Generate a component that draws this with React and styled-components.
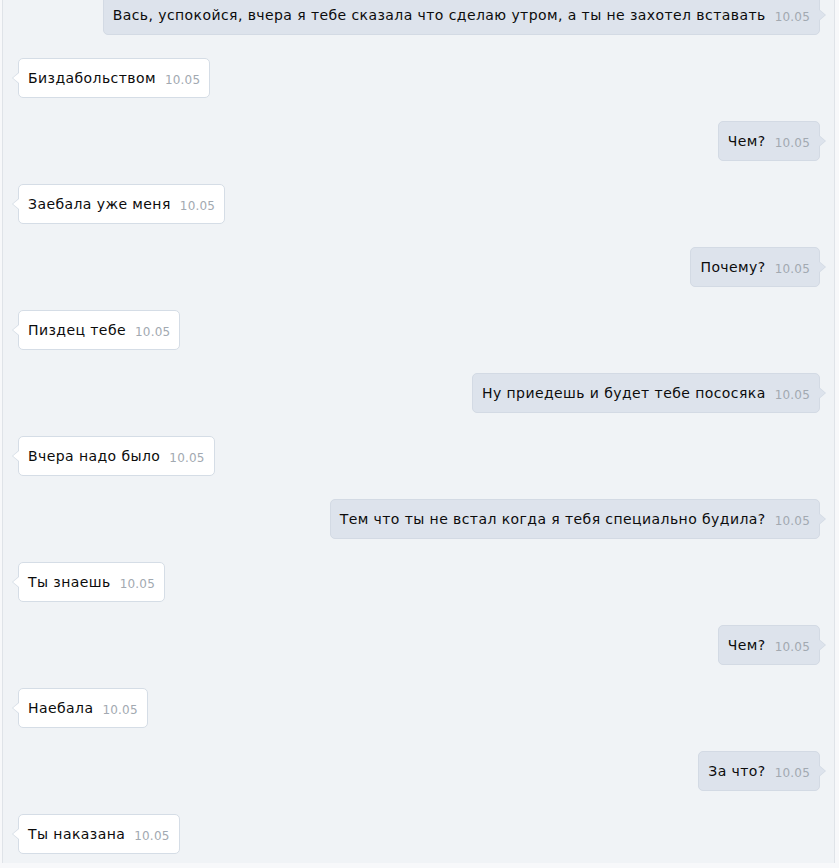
import React from "react";
import styled, { createGlobalStyle } from "styled-components";

const GlobalStyle = createGlobalStyle`
  html, body {
    margin: 0;
    padding: 0;
    background: #f7f8fa;
    overflow: hidden;
  }
`;

const Page = styled.div`
  height: 868px;
  overflow: hidden;
  background: #f7f8fa;
  padding: 0 4px 0 2px;
`;

const Thread = styled.div`
  height: 100%;
  background: #f0f3f6;
  border-left: 1px solid #dfe3e8;
  border-right: 1px solid #dfe3e8;
  padding: 0 14px 0 15px;
  display: flex;
  flex-direction: column;
  gap: 23px;
  margin-top: -5px;
  font-family: "DejaVu Sans", Verdana, sans-serif;
`;

const Row = styled.div`
  display: flex;
  justify-content: ${(p) => (p.out ? "flex-end" : "flex-start")};
`;

const Bubble = styled.div`
  position: relative;
  box-sizing: border-box;
  height: 40px;
  display: flex;
  align-items: center;
  gap: 9px;
  padding: 0 9px 0 9px;
  border-radius: 5px;
  background: ${(p) => (p.out ? "#dde3ec" : "#ffffff")};
  border: 1px solid ${(p) => (p.out ? "#d3dae4" : "#d5dde6")};

  /* little tail pointing to the sender side */
  &::before {
    content: "";
    position: absolute;
    top: 50%;
    margin-top: -6px;
    ${(p) => (p.out ? "right: -7px;" : "left: -7px;")}
    border-top: 6px solid transparent;
    border-bottom: 6px solid transparent;
    ${(p) =>
      p.out
        ? "border-left: 7px solid #d3dae4;"
        : "border-right: 7px solid #d5dde6;"}
  }

  &::after {
    content: "";
    position: absolute;
    top: 50%;
    margin-top: -5px;
    ${(p) => (p.out ? "right: -6px;" : "left: -6px;")}
    border-top: 5px solid transparent;
    border-bottom: 5px solid transparent;
    ${(p) =>
      p.out
        ? "border-left: 6px solid #dde3ec;"
        : "border-right: 6px solid #ffffff;"}
  }
`;

const Text = styled.span`
  font-size: 14px;
  letter-spacing: 0.42px;
  color: #0c0c0c;
  white-space: nowrap;
  margin-top: -1px;
`;

const Time = styled.span`
  font-size: 12px;
  letter-spacing: 0.2px;
  color: #a2a9b1;
  margin-top: 3px;
`;

const messages = [
  { out: true, text: "Вась, успокойся, вчера я тебе сказала что сделаю утром, а ты не захотел вставать" },
  { out: false, text: "Биздабольством" },
  { out: true, text: "Чем?" },
  { out: false, text: "Заебала уже меня" },
  { out: true, text: "Почему?" },
  { out: false, text: "Пиздец тебе" },
  { out: true, text: "Ну приедешь и будет тебе пососяка" },
  { out: false, text: "Вчера надо было" },
  { out: true, text: "Тем что ты не встал когда я тебя специально будила?" },
  { out: false, text: "Ты знаешь" },
  { out: true, text: "Чем?" },
  { out: false, text: "Наебала" },
  { out: true, text: "За что?" },
  { out: false, text: "Ты наказана" },
];

export default function App() {
  return (
    <>
      <GlobalStyle />
      <Page>
        <Thread>
          {messages.map((m, i) => (
            <Row key={i} out={m.out}>
              <Bubble out={m.out}>
                <Text>{m.text}</Text>
                <Time>10.05</Time>
              </Bubble>
            </Row>
          ))}
        </Thread>
      </Page>
    </>
  );
}
